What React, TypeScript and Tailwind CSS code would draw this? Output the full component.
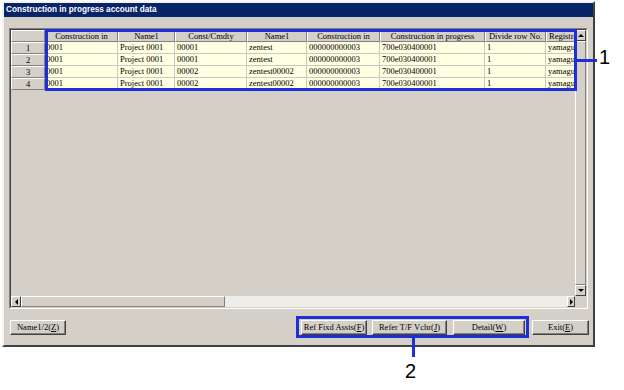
import React from "react";

const cols = [
  { w: 73, h: "Construction in" },
  { w: 57, h: "Name1" },
  { w: 72, h: "Const/Cmdty" },
  { w: 60, h: "Name1" },
  { w: 73, h: "Construction in" },
  { w: 105, h: "Construction in progress" },
  { w: 61, h: "Divide row No." },
  { w: 60, h: "Registrant" },
];

const rows = [
  ["0001", "Project 0001", "00001", "zentest", "000000000003", "700e030400001", "1", "yamaguchi"],
  ["0001", "Project 0001", "00001", "zentest", "000000000003", "700e030400001", "1", "yamaguchi"],
  ["0001", "Project 0001", "00002", "zentest00002", "000000000003", "700e030400001", "1", "yamaguchi"],
  ["0001", "Project 0001", "00002", "zentest00002", "000000000003", "700e030400001", "1", "yamaguchi"],
];

const serif = { fontFamily: '"Liberation Serif", "Times New Roman", serif' };

function Btn({ w, label, k, ml }: { w: number; label: string; k: string; ml?: number }) {
  const idx = label.lastIndexOf("(");
  const before = label.slice(0, idx + 1);
  const after = label.slice(idx + 2);
  return (
    <div
      className="h-[15px] flex items-center justify-center bg-[#d4d0c8] border border-t-white border-l-white border-r-[#404040] border-b-[#404040] shadow-[inset_-1px_-1px_0_#808080] text-[8.5px] leading-none text-black shrink-0"
      style={{ width: w, marginLeft: ml ?? 0, ...serif }}
    >
      <span>
        {before}
        <span className="underline">{k}</span>
        {after}
      </span>
    </div>
  );
}

function Arrow({ dir }: { dir: "up" | "down" | "left" | "right" }) {
  const pts =
    dir === "up"
      ? "1,4 4,1 7,4"
      : dir === "down"
      ? "1,1 4,4 7,1"
      : dir === "left"
      ? "4,1 1,4 4,7"
      : "1,1 4,4 1,7";
  const w = dir === "up" || dir === "down" ? 8 : 5;
  const h = dir === "up" || dir === "down" ? 5 : 8;
  return (
    <svg width={w} height={h} viewBox={`0 0 ${w} ${h}`}>
      <polygon points={pts} fill="#000" />
    </svg>
  );
}

function SBtn({ dir, w, h }: { dir: "up" | "down" | "left" | "right"; w: number; h: number }) {
  return (
    <div
      className="flex items-center justify-center bg-[#d4d0c8] border border-t-white border-l-white border-r-[#404040] border-b-[#404040] shrink-0"
      style={{ width: w, height: h }}
    >
      <Arrow dir={dir} />
    </div>
  );
}

export default function App() {
  return (
    <div className="relative w-[624px] h-[390px] bg-white overflow-hidden" style={serif}>
      <div className="pt-[1px] pl-[2px]">
        <div className="w-[593px] h-[346px] bg-[#d4d0c8] border-2 border-t-[#f4f3ee] border-l-[#f4f3ee] border-r-[#404040] border-b-[#404040] flex flex-col">
          {/* Title bar */}
          <div
            className="h-[14px] bg-[#0a246a] text-white font-bold text-[8.2px] leading-none flex items-center pl-[2px]"
            style={{ fontFamily: '"Liberation Sans", Arial, sans-serif' }}
          >
            Construction in progress account data
          </div>

          {/* Grid frame */}
          <div className="mt-[11px] ml-[5px] w-[579px] h-[281px] border border-t-[#808080] border-l-[#808080] border-r-white border-b-white">
            <div className="w-full h-full border border-t-[#404040] border-l-[#404040] border-r-[#d4d0c8] border-b-[#d4d0c8] flex flex-col">
              <div className="flex flex-1 min-h-0">
                {/* table */}
                <div className="flex-1 overflow-hidden">
                  {/* header row */}
                  <div className="flex h-[12px]">
                    <div className="w-[34px] shrink-0 bg-[#d4d0c8] border border-t-white border-l-white border-r-[#808080] border-b-[#808080]" />
                    {cols.map((c, i) => (
                      <div
                        key={i}
                        className={`shrink-0 bg-[#d4d0c8] border border-t-white border-l-white border-r-[#808080] border-b-[#808080] text-[8.5px] leading-[10px] whitespace-nowrap overflow-hidden text-black ${i === 7 ? "text-left pl-[2px]" : "text-center"}`}
                        style={{ width: c.w }}
                      >
                        {c.h}
                      </div>
                    ))}
                  </div>
                  {rows.map((r, ri) => (
                    <div key={ri} className="flex h-[12px]">
                      <div className="w-[34px] shrink-0 bg-[#d4d0c8] border border-t-white border-l-white border-r-[#808080] border-b-[#808080] text-[8.5px] leading-[10px] text-center text-black">
                        {ri + 1}
                      </div>
                      {r.map((v, ci) => (
                        <div
                          key={ci}
                          className="shrink-0 bg-[#ffffe1] border-r border-b border-r-[#c8c8c8] border-b-[#c8c8c8] text-[8.5px] leading-[11px] whitespace-nowrap overflow-hidden text-black"
                          style={{ width: cols[ci].w, paddingLeft: ci === 0 ? 1 : 2 }}
                        >
                          {v}
                        </div>
                      ))}
                    </div>
                  ))}
                </div>
                {/* vertical scrollbar */}
                <div className="w-[11px] flex flex-col bg-[#d4d0c8] shrink-0">
                  <SBtn dir="up" w={11} h={11} />
                  <div className="flex-1 border border-t-white border-l-white border-r-[#808080] border-b-[#808080]" />
                  <SBtn dir="down" w={11} h={11} />
                </div>
              </div>
              {/* horizontal scrollbar */}
              <div className="flex h-[11px]">
                <div className="flex-1 flex bg-[#eeede8]">
                  <SBtn dir="left" w={10} h={11} />
                  <div className="w-[204px] h-[11px] bg-[#d4d0c8] border border-t-white border-l-white border-r-[#808080] border-b-[#808080]" />
                  <div className="flex-1" />
                  <SBtn dir="right" w={8} h={11} />
                </div>
                <div className="w-[11px] bg-[#d4d0c8]" />
              </div>
            </div>
          </div>

          {/* Buttons */}
          <div className="flex mt-[11px] pl-[6px]">
            <Btn w={56} label="Name1/2(Z)" k="Z" />
            <div className="flex ml-[235px]">
              <Btn w={66} label="Ref Fixd Assts(F)" k="F" />
              <Btn w={75} label="Refer T/F Vchr(J)" k="J" ml={5} />
              <Btn w={72} label="Detail(W)" k="W" ml={6} />
              <Btn w={57} label="Exit(E)" k="E" ml={7} />
            </div>
          </div>
        </div>
      </div>

      {/* Annotations */}
      <div className="absolute left-[45px] top-[29px] w-[532px] h-[62px] border-[3px] border-[#1f2fd8]" />
      <div className="absolute left-[577px] top-[59px] w-[20px] h-[3px] bg-[#1f2fd8]" />
      <div
        className="absolute left-[599px] top-[47px] text-[20px] leading-none text-black"
        style={{ fontFamily: '"Liberation Sans", Arial, sans-serif' }}
      >
        1
      </div>

      <div className="absolute left-[296px] top-[316px] w-[233px] h-[22px] border-[3px] border-[#1f2fd8]" />
      <div className="absolute left-[412px] top-[338px] w-[3px] h-[19px] bg-[#1f2fd8]" />
      <div
        className="absolute left-[405px] top-[361px] text-[20px] leading-none text-black"
        style={{ fontFamily: '"Liberation Sans", Arial, sans-serif' }}
      >
        2
      </div>
    </div>
  );
}
